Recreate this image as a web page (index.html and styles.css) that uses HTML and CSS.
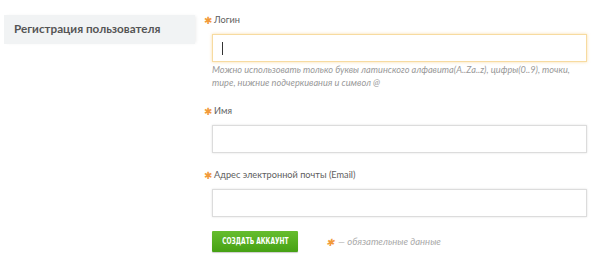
FILE: index.html
```html
<!DOCTYPE html>
<html lang="ru">
<head>
<meta charset="utf-8">
<link rel="stylesheet" href="styles.css">
</head>
<body>
<div class="page">
  <aside class="side">
    <div class="side-title">Регистрация пользователя</div>
  </aside>
  <main class="form">
    <div class="field">
      <div class="label"><span class="star">✱</span>Логин</div>
      <div class="input focus"><span class="caret"></span></div>
      <div class="hint">Можно использовать только буквы латинского алфавита(A..Za..z), цифры(0..9), точки,<br>тире, нижние подчеркивания и символ @</div>
    </div>
    <div class="field">
      <div class="label"><span class="star">✱</span>Имя</div>
      <div class="input"></div>
    </div>
    <div class="field">
      <div class="label"><span class="star">✱</span>Адрес электронной почты (Email)</div>
      <div class="input"></div>
    </div>
    <div class="actions">
      <button class="btn"><span class="btn-text">СОЗДАТЬ АККАУНТ</span></button>
      <div class="note"><span class="star">✱</span>— обязательные данные</div>
    </div>
  </main>
</div>
</body>
</html>
```
FILE: styles.css
```css
* { box-sizing: border-box; }
html, body { margin: 0; padding: 0; background: #fff; }
body { font-family: Lato, "Open Sans", sans-serif; color: #555; }
.page { display: flex; align-items: flex-start; width: 600px; height: 267px; overflow: hidden; }
.side { width: 191px; margin: 15px 0 0 4px; flex: none; }
.side-title {
  height: 29px;
  padding: 6px 0 0 10px;
  background: #f1f3f4;
  box-shadow: 2px 0 3px -1px rgba(0,0,0,0.08);
  font-size: 11.7px;
  font-weight: 700;
  color: #555;
}
.form { margin-left: 17px; padding-top: 12px; width: 375px; flex: none; }
.field { margin-bottom: 14px; }
.label { font-size: 9.2px; color: #5e5e5e; height: 16px; line-height: 16px; display: flex; align-items: center; }
.star { color: #f29a3a; font-size: 10px; width: 9px; display: inline-block; }
.label .star { margin-left: -8px; margin-right: 1px; }
.input {
  margin-top: 6px;
  height: 28px;
  border: 1px solid #dcdcdc;
  box-shadow: 0 0 2px rgba(0,0,0,0.12);
  background: #fff;
  position: relative;
}
.input.focus { border-color: #f7dba0; box-shadow: 0 0 3px rgba(245,200,110,0.6); }
.caret { position: absolute; left: 9px; top: 7px; width: 1px; height: 13px; background: #333; }
.hint { font-size: 9.2px; font-style: italic; color: #999; line-height: 13px; margin-top: 1px; margin-bottom: 13px; }
.actions { display: flex; align-items: center; margin-top: 4px; }
.btn {
  width: 86px; height: 21px;
  border: none;
  border-radius: 1px;
  background: linear-gradient(#66bd2e, #46a114);
  box-shadow: 0 1px 1px rgba(0,0,0,0.2);
  color: #fff;
  padding: 0;
  display: flex; align-items: center; justify-content: center;
}
.btn-text {
  display: inline-block;
  font-family: "DejaVu Sans Condensed", "Liberation Sans Narrow", sans-serif;
  font-weight: 700;
  font-size: 8px;
  white-space: nowrap;
  transform: scaleX(0.82);
}
.note { margin-left: 28px; font-size: 9.5px; font-style: italic; color: #aaa; display: flex; align-items: center; }
.note .star { margin-right: 3px; }
```
